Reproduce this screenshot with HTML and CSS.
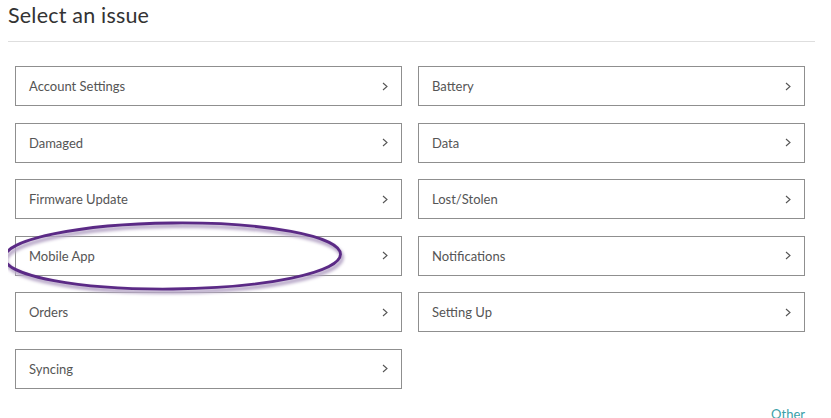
FILE: index.html
```html
<!DOCTYPE html>
<html>
<head>
<title>Select an issue</title>
<link rel="stylesheet" href="styles.css">
</head>
<body>
<div class="page">
    <h1 class="title">Select an issue</h1>
    <hr class="divider">

    <div class="issues">
        <a class="issue" href="#"><span>Account Settings</span><svg class="chev" viewBox="0 0 6 9"><polyline points="1,1 5,4.5 1,8"/></svg></a>
        <a class="issue" href="#"><span>Battery</span><svg class="chev" viewBox="0 0 6 9"><polyline points="1,1 5,4.5 1,8"/></svg></a>
        <a class="issue" href="#"><span>Damaged</span><svg class="chev" viewBox="0 0 6 9"><polyline points="1,1 5,4.5 1,8"/></svg></a>
        <a class="issue" href="#"><span>Data</span><svg class="chev" viewBox="0 0 6 9"><polyline points="1,1 5,4.5 1,8"/></svg></a>
        <a class="issue" href="#"><span>Firmware Update</span><svg class="chev" viewBox="0 0 6 9"><polyline points="1,1 5,4.5 1,8"/></svg></a>
        <a class="issue" href="#"><span>Lost/Stolen</span><svg class="chev" viewBox="0 0 6 9"><polyline points="1,1 5,4.5 1,8"/></svg></a>
        <a class="issue" href="#"><span>Mobile App</span><svg class="chev" viewBox="0 0 6 9"><polyline points="1,1 5,4.5 1,8"/></svg></a>
        <a class="issue" href="#"><span>Notifications</span><svg class="chev" viewBox="0 0 6 9"><polyline points="1,1 5,4.5 1,8"/></svg></a>
        <a class="issue" href="#"><span>Orders</span><svg class="chev" viewBox="0 0 6 9"><polyline points="1,1 5,4.5 1,8"/></svg></a>
        <a class="issue" href="#"><span>Setting Up</span><svg class="chev" viewBox="0 0 6 9"><polyline points="1,1 5,4.5 1,8"/></svg></a>
        <a class="issue" href="#"><span>Syncing</span><svg class="chev" viewBox="0 0 6 9"><polyline points="1,1 5,4.5 1,8"/></svg></a>
    </div>

    <div class="footer">
        <a class="other" href="#">Other</a>
    </div>

    <!-- hand drawn highlight round "Mobile App" -->
    <svg class="circle" width="350" height="80" viewBox="0 0 350 80">
        <defs>
            <filter id="blur" x="-10%" y="-20%" width="120%" height="140%">
                <feGaussianBlur stdDeviation="1.6"/>
            </filter>
        </defs>
        <ellipse cx="174" cy="41" rx="168" ry="33" transform="rotate(-0.6 174 41)" fill="none" stroke="#b8a8c8" stroke-width="4" filter="url(#blur)"/>
        <ellipse cx="172.5" cy="38" rx="168" ry="33" transform="rotate(-0.6 172.5 38)" fill="none" stroke="#5b2a86" stroke-width="2.8"/>
    </svg>
</div>
</body>
</html>
```

FILE: styles.css
```css
body {
    margin: 0;
    padding: 0 8px;
    background: #fff;
    font-family: "Lato", "Open Sans", sans-serif;
    color: #555;
}

.page {
    position: relative;
    height: 418px;
    overflow: hidden;
}

.title {
    margin: 0;
    padding-top: 1px;
    font-size: 21.5px;
    font-weight: 400;
    color: #333;
    line-height: 28px;
    letter-spacing: 0.2px;
}

.divider {
    border: 0;
    border-top: 1px solid #dedede;
    margin: 12px 0 0 0;
    width: 807px;
}

.issues {
    display: grid;
    grid-template-columns: 387px 387px;
    column-gap: 16px;
    row-gap: 16.5px;
    margin-top: 24px;
    padding-left: 7px;
}

.issue {
    display: flex;
    align-items: center;
    justify-content: space-between;
    height: 40px;
    box-sizing: border-box;
    border: 1px solid #8f8f8f;
    padding: 0 13px 0 13px;
    text-decoration: none;
    color: #555;
    font-size: 13px;
}

.chev {
    width: 6px;
    height: 9px;
    fill: none;
    stroke: #555;
    stroke-width: 1.1;
}

.footer {
    display: flex;
    justify-content: flex-end;
    padding-right: 18px;
    margin-top: 17px;
}

.other {
    color: #3aa0a8;
    text-decoration: none;
    font-size: 13px;
}

.circle {
    position: absolute;
    left: -8px;
    top: 218px;
}
```
